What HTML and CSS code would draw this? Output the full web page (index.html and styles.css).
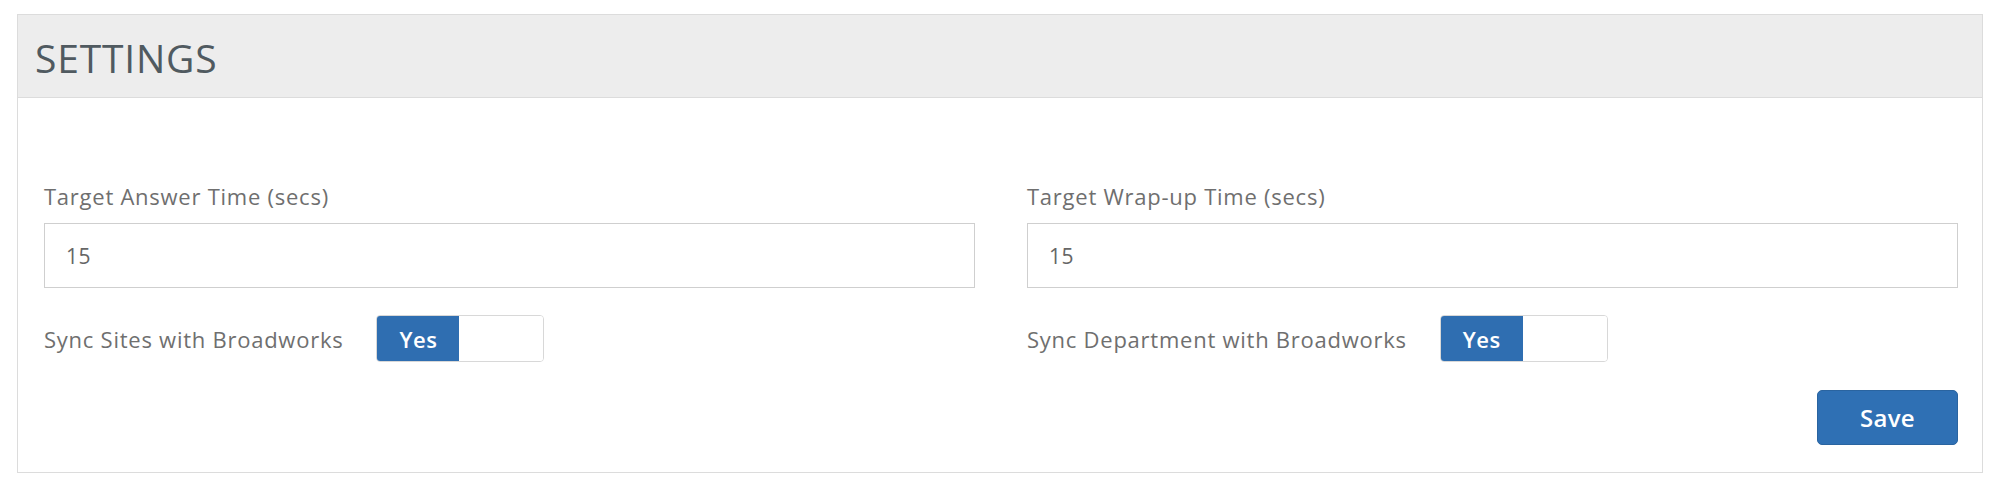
FILE: index.html
```html
<!DOCTYPE html>
<html lang="en">
<head>
<meta charset="utf-8">
<title>Settings</title>
<link rel="stylesheet" href="styles.css">
</head>
<body>
<div class="page">
  <section class="panel">
    <header class="panel-head">
      <h1 class="panel-title">SETTINGS</h1>
    </header>
    <div class="panel-body">
      <div class="grid">
        <div class="col">
          <label class="field-label">Target Answer Time (secs)</label>
          <div class="input">15</div>
          <div class="sync-row">
            <span class="sync-label">Sync Sites with Broadworks</span>
            <div class="toggle"><span class="toggle-on">Yes</span><span class="toggle-off"></span></div>
          </div>
        </div>
        <div class="col">
          <label class="field-label">Target Wrap-up Time (secs)</label>
          <div class="input">15</div>
          <div class="sync-row">
            <span class="sync-label">Sync Department with Broadworks</span>
            <div class="toggle"><span class="toggle-on">Yes</span><span class="toggle-off"></span></div>
          </div>
        </div>
      </div>
      <div class="actions">
        <button class="btn-save">Save</button>
      </div>
    </div>
  </section>
</div>
</body>
</html>
```

FILE: styles.css
```css
* { box-sizing: border-box; }
html, body { margin: 0; padding: 0; background: #ffffff; }
body {
  font-family: "Open Sans", "Liberation Sans", sans-serif;
  color: #6b6b6b;
}
.page {
  padding: 14px 17px 0 17px;
}
.panel {
  border: 1px solid #dcdcdc;
  background: #fff;
}
.panel-head {
  height: 83px;
  background: #ededed;
  border-bottom: 1px solid #dcdcdc;
  display: flex;
  align-items: center;
  padding-left: 17px;
}
.panel-title {
  margin: 0;
  font-size: 39px;
  font-weight: 400;
  color: #505a60;
  letter-spacing: 0.8px;
  line-height: 1;
  padding-top: 2px;
}
.panel-body {
  padding: 82px 24px 27px 26px;
}
.grid {
  display: grid;
  grid-template-columns: 1fr 1fr;
  column-gap: 52px;
}
.col {
  display: flex;
  flex-direction: column;
}
.field-label {
  font-size: 22px;
  letter-spacing: 0.75px;
  line-height: 32px;
  color: #6f6f6f;
  height: 32px;
}
.input {
  margin-top: 11px;
  height: 65px;
  border: 1px solid #cfcfcf;
  display: flex;
  align-items: center;
  padding-left: 21px;
  font-size: 21px;
  letter-spacing: 0.5px;
  color: #666;
}
.sync-row {
  margin-top: 27px;
  display: flex;
  align-items: center;
  gap: 33px;
}
.sync-label {
  font-size: 22px;
  letter-spacing: 0.75px;
  color: #6f6f6f;
}
.toggle {
  display: flex;
  height: 47px;
  width: 168px;
  border-radius: 4px;
  overflow: hidden;
  border: 1px solid #d8d8d8;
}
.toggle-on {
  width: 82px;
  background: #2f6eb1;
  color: #fff;
  display: flex;
  align-items: center;
  justify-content: center;
  font-size: 22px;
  font-weight: 600;
  letter-spacing: 0.5px;
}
.toggle-off {
  flex: 1;
  background: #fff;
}
.actions {
  margin-top: 28px;
  display: flex;
  justify-content: flex-end;
}
.btn-save {
  width: 141px;
  height: 55px;
  background: #2f70b4;
  border: 1px solid #2a64a0;
  border-radius: 5px;
  color: #fff;
  font-family: "Open Sans", "Liberation Sans", sans-serif;
  font-size: 24px;
  font-weight: 600;
  letter-spacing: 0.3px;
  cursor: pointer;
}
```
